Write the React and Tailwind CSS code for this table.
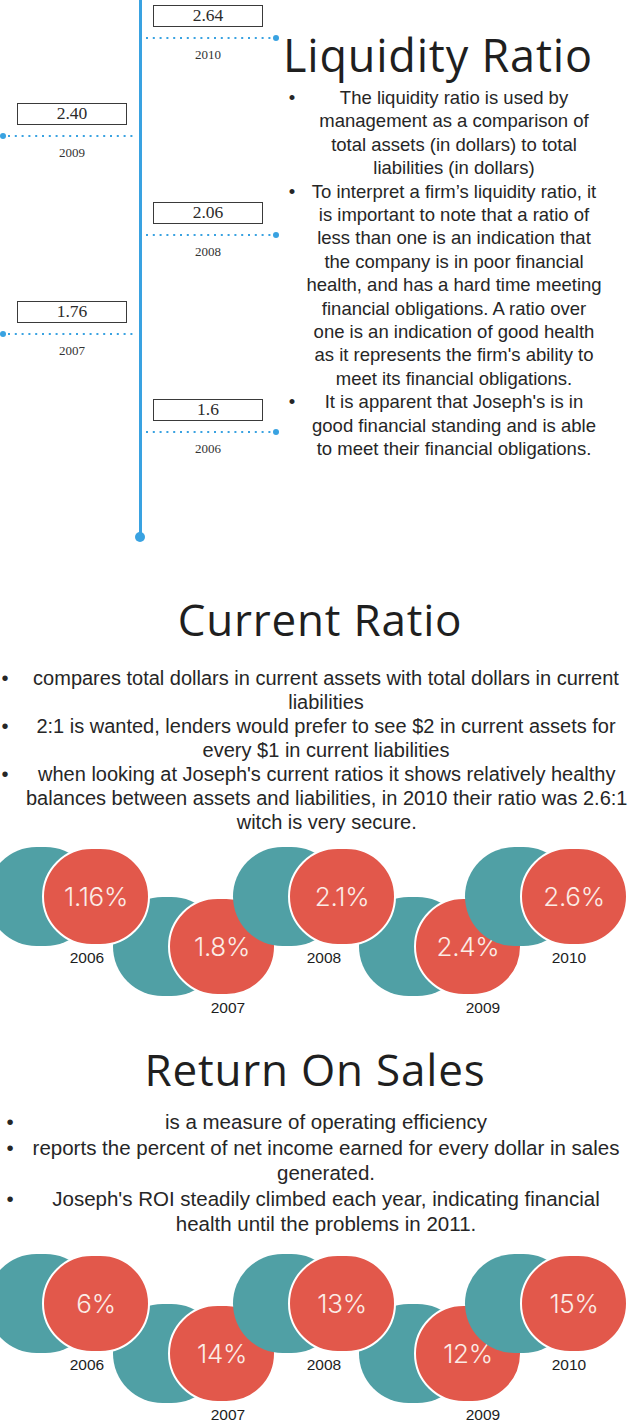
import React from 'react';

const BLUE = '#39a2e1';

const leftItems = [
  { value: '2.40', year: '2009' },
  { value: '1.76', year: '2007' },
];

const rightItems = [
  { value: '2.64', year: '2010' },
  { value: '2.06', year: '2008' },
  { value: '1.6', year: '2006' },
];

const liquidity = [
  ['The liquidity ratio is used by', 'management as a comparison of', 'total assets (in dollars) to total', 'liabilities (in dollars)'],
  [
    'To interpret a firm\u2019s liquidity ratio, it',
    'is important to note that a ratio of',
    'less than one is an indication that',
    'the company is in poor financial',
    'health, and has a hard time meeting',
    'financial obligations. A ratio over',
    'one is an indication of good health',
    "as it represents the firm's ability to",
    'meet its financial obligations.',
  ],
  ["It is apparent that Joseph's is in", 'good financial standing and is able', 'to meet their financial obligations.'],
];

const current = [
  ['compares total dollars in current assets with total dollars in current', 'liabilities'],
  ['2:1 is wanted, lenders would prefer to see $2 in current assets for', 'every $1 in current liabilities'],
  [
    "when looking at Joseph's current ratios it shows relatively healthy",
    'balances between assets and liabilities, in 2010 their ratio was 2.6:1',
    'witch is very secure.',
  ],
];

const sales = [
  ['is a measure of operating efficiency'],
  ['reports the percent of net income earned for every dollar in sales', 'generated.'],
  ["Joseph's ROI steadily climbed each year, indicating financial", 'health until the problems in 2011.'],
];

const pairLayout = [
  { ml: 'ml-[-13px]', low: false, yl: 'ml-[70px]' },
  { ml: 'ml-[-37px]', low: true, yl: 'ml-[85px]' },
  { ml: 'ml-[-43px]', low: false, yl: 'ml-[61px]' },
  { ml: 'ml-[-37px]', low: true, yl: 'ml-[94px]' },
  { ml: 'ml-[-57px]', low: false, yl: 'ml-[74px]' },
];

const years = ['2006', '2007', '2008', '2009', '2010'];

function Connector({ side }) {
  return (
    <svg width="135" height="6" className="block">
      {side === 'right' ? (
        <>
          <line x1="1" y1="3" x2="127" y2="3" stroke={BLUE} strokeWidth="2" strokeDasharray="2 4.8" />
          <circle cx="131" cy="3" r="3" fill={BLUE} />
        </>
      ) : (
        <>
          <circle cx="3" cy="3" r="3" fill={BLUE} />
          <line x1="8" y1="3" x2="135" y2="3" stroke={BLUE} strokeWidth="2" strokeDasharray="2 4.8" />
        </>
      )}
    </svg>
  );
}

function Marker({ value, year, side, className = '' }) {
  const offset = side === 'right' ? 'ml-[8px]' : 'ml-[17px]';
  return (
    <div className={`flex flex-col ${className}`}>
      <div className={`${offset} w-[110px] h-[22px] border border-[#3a3a3a] flex items-center justify-center text-[17.5px] leading-none text-[#2b2b2b]`}>
        {value}
      </div>
      <div className="mt-[8px]">
        <Connector side={side} />
      </div>
      <div className={`${offset} w-[110px] mt-[7px] text-center text-[13px] leading-[14px] text-[#333]`}>{year}</div>
    </div>
  );
}

function Timeline() {
  return (
    <div className="flex w-[280px] shrink-0 font-['Liberation_Serif',serif]">
      <div className="w-[135px] pt-[103px] flex flex-col">
        {leftItems.map((m, i) => (
          <Marker key={m.year} {...m} side="left" className={i < leftItems.length - 1 ? 'h-[198px]' : ''} />
        ))}
      </div>
      <div className="w-[10px] flex flex-col items-center">
        <div className="w-[3px] h-[535px] bg-[#39a2e1]" />
        <div className="w-[10px] h-[10px] -mt-[3px] rounded-full bg-[#39a2e1]" />
      </div>
      <div className="flex-1 pt-[5px] flex flex-col">
        {rightItems.map((m, i) => (
          <Marker key={m.year} {...m} side="right" className={i < rightItems.length - 1 ? 'h-[197px]' : ''} />
        ))}
      </div>
    </div>
  );
}

function BulletList({ items, bulletClass, lineClass, textClass }) {
  return (
    <ul className={`font-['Liberation_Sans',Arial,sans-serif] text-[#262626] ${textClass}`}>
      {items.map((lines, i) => (
        <li key={i} className="flex">
          <span className={`shrink-0 text-center ${bulletClass}`}>•</span>
          <div className={`flex-1 text-center ${lineClass}`}>
            {lines.map((l) => (
              <div key={l} className="whitespace-nowrap">{l}</div>
            ))}
          </div>
        </li>
      ))}
    </ul>
  );
}

function Bubbles({ values }) {
  return (
    <div className="flex items-start overflow-hidden">
      {pairLayout.map((p, i) => (
        <div key={years[i]} className={`${p.ml} shrink-0 flex flex-col ${p.low ? 'mt-[50px]' : 'relative z-10'}`}>
          <div className="flex">
            <div className="w-[108px] h-[99px] rounded-full bg-[#50a0a5]" />
            <div className="-ml-[53px] w-[108px] h-[99px] rounded-full bg-[#e2584b] border-2 border-white flex items-center justify-center font-['Inter',sans-serif] font-light text-[26px] tracking-[-0.3px] text-[#fbece6]">
              {values[i]}
            </div>
          </div>
          <div className={`${p.yl} mt-[4px] w-[60px] text-center font-['Liberation_Sans',Arial,sans-serif] text-[15.5px] leading-[16px] text-[#1d1d1d]`}>
            {years[i]}
          </div>
        </div>
      ))}
    </div>
  );
}

const titleFont = "font-['Open_Sans',sans-serif] font-normal leading-none text-[#1f1f1f]";

export default function App() {
  return (
    <div className="w-[630px] h-[1424px] overflow-hidden bg-white">
      <section className="flex h-[542px]">
        <Timeline />
        <div className="flex-1">
          <h1 className={`mt-[32px] pl-[3px] whitespace-nowrap text-[45px] tracking-[0.8px] ${titleFont}`}>Liquidity Ratio</h1>
          <div className="mt-[9px] pr-[26px]">
            <BulletList items={liquidity} bulletClass="w-[24px]" lineClass="" textClass="text-[18.5px] leading-[23.4px]" />
          </div>
        </div>
      </section>

      <h2 className={`mt-[55px] pl-[10px] text-center text-[44px] tracking-[0.8px] ${titleFont}`}>Current Ratio</h2>
      <div className="mt-[25px] pr-[4px]">
        <BulletList items={current} bulletClass="w-[10px]" lineClass="pl-[16px]" textClass="text-[20px] leading-[24px]" />
      </div>

      <div className="mt-[13px]">
        <Bubbles values={['1.16%', '1.8%', '2.1%', '2.4%', '2.6%']} />
      </div>

      <h2 className={`mt-[31px] text-center text-[44px] tracking-[0.8px] ${titleFont}`}>Return On Sales</h2>
      <div className="mt-[18px] pr-[4px]">
        <BulletList items={sales} bulletClass="w-[20px]" lineClass="pl-[6px]" textClass="text-[20.5px] leading-[25.5px]" />
      </div>

      <div className="mt-[17px]">
        <Bubbles values={['6%', '14%', '13%', '12%', '15%']} />
      </div>
    </div>
  );
}
